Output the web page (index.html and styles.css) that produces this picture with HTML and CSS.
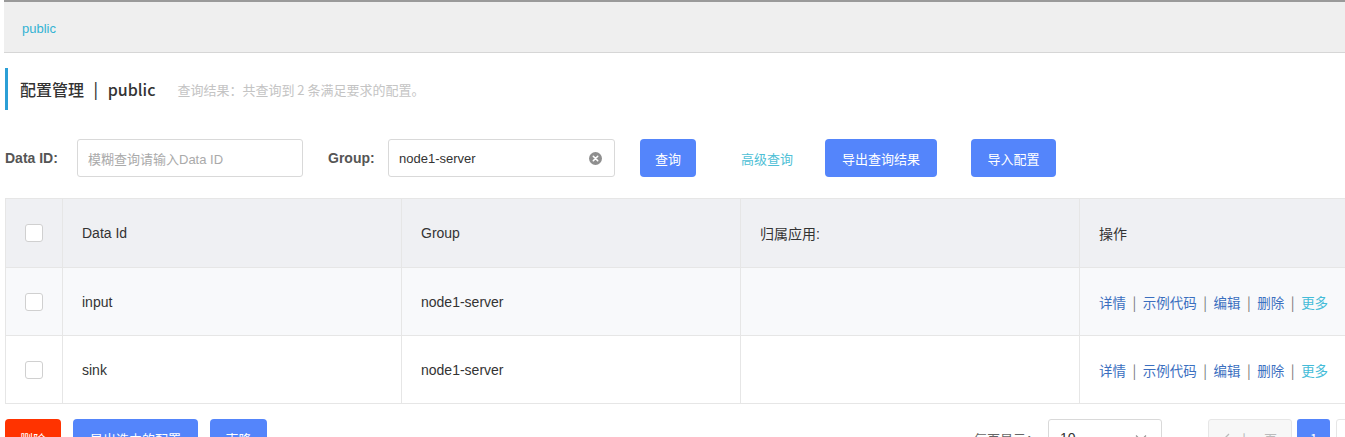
FILE: index.html
```html
<!DOCTYPE html>
<html lang="zh-CN">
<head>
<meta charset="utf-8">
<title>配置管理</title>
<link rel="stylesheet" href="styles.css">
</head>
<body>
<div class="topbar"><span class="ns">public</span></div>
<div class="page">
  <div class="title-row">
    <div class="title">配置管理 <span class="sep">|</span> public</div>
    <div class="summary">查询结果：共查询到 2 条满足要求的配置。</div>
  </div>

  <div class="search">
    <label class="lbl lbl-id">Data ID:</label>
    <div class="input input-id"><span class="placeholder">模糊查询请输入Data ID</span></div>
    <label class="lbl lbl-group">Group:</label>
    <div class="input input-group">
      <span class="value">node1-server</span>
      <span class="clear">
        <svg width="13" height="13" viewBox="0 0 13 13"><circle cx="6.5" cy="6.5" r="6.5" fill="#8f8f8f"/><path d="M4.3 4.3L8.7 8.7M8.7 4.3L4.3 8.7" stroke="#fff" stroke-width="1.6" stroke-linecap="round"/></svg>
      </span>
    </div>
    <button class="btn btn-primary btn-query">查询</button>
    <a class="adv">高级查询</a>
    <button class="btn btn-primary btn-export">导出查询结果</button>
    <button class="btn btn-primary btn-import">导入配置</button>
  </div>

  <table class="grid">
    <colgroup>
      <col class="c-check"><col class="c-col"><col class="c-col"><col class="c-col"><col class="c-ops">
    </colgroup>
    <thead>
      <tr>
        <th class="chk"><span class="box"></span></th>
        <th>Data Id</th>
        <th>Group</th>
        <th>归属应用:</th>
        <th>操作</th>
      </tr>
    </thead>
    <tbody>
      <tr class="hover">
        <td class="chk"><span class="box"></span></td>
        <td>input</td>
        <td>node1-server</td>
        <td></td>
        <td class="ops"><a>详情</a><span class="bar">|</span><a>示例代码</a><span class="bar">|</span><a>编辑</a><span class="bar">|</span><a>删除</a><span class="bar">|</span><a class="more">更多</a></td>
      </tr>
      <tr>
        <td class="chk"><span class="box"></span></td>
        <td>sink</td>
        <td>node1-server</td>
        <td></td>
        <td class="ops"><a>详情</a><span class="bar">|</span><a>示例代码</a><span class="bar">|</span><a>编辑</a><span class="bar">|</span><a>删除</a><span class="bar">|</span><a class="more">更多</a></td>
      </tr>
    </tbody>
  </table>

  <div class="footer">
    <div class="batch">
      <button class="btn btn-danger btn-del">删除</button>
      <button class="btn btn-primary btn-exsel">导出选中的配置</button>
      <button class="btn btn-primary btn-clone">克隆</button>
    </div>
    <div class="pager">
      <span class="per">每页显示：</span>
      <div class="select"><span>10</span>
        <svg width="12" height="8" viewBox="0 0 12 8"><path d="M1 1.5L6 6.5L11 1.5" fill="none" stroke="#999" stroke-width="1.3"/></svg>
      </div>
      <button class="pbtn prev">
        <svg width="7" height="11" viewBox="0 0 7 11"><path d="M6 1L1.5 5.5L6 10" fill="none" stroke="#bbb" stroke-width="1.3"/></svg>
        上一页</button>
      <button class="pbtn cur">1</button>
      <button class="pbtn next">下一页</button>
    </div>
  </div>
</div>
</body>
</html>
```
FILE: styles.css
```css
html, body {
  margin: 0;
  padding: 0;
  background: #fff;
  overflow: hidden;
}
body {
  font-family: "Liberation Sans", "Noto Sans CJK SC", sans-serif;
  color: #333;
  font-size: 14px;
  width: 1345px;
}
.topbar {
  margin-left: 4px;
  height: 50px;
  border-top: 2px solid #9a9a9a;
  border-bottom: 1px solid #d6d6d6;
  background: #efefef;
  display: flex;
  align-items: center;
  padding-left: 18px;
  box-sizing: content-box;
}
.ns {
  color: #33b3d3;
  font-size: 13px;
  margin-top: 2px;
}
.page {
  padding-left: 5px;
}
.title-row {
  margin-top: 15px;
  height: 42px;
  border-left: 3px solid #2b9fd6;
  display: flex;
  align-items: center;
  padding-left: 12px;
}
.title {
  font-family: "Noto Sans CJK SC", sans-serif;
  font-size: 16px;
  font-weight: 500;
  color: #333;
}
.title .sep {
  margin: 0 6px;
}
.summary {
  margin-left: 22px;
  font-family: "Noto Sans CJK SC", sans-serif;
  font-size: 13px;
  color: #c4c4c4;
}
.search {
  margin-top: 29px;
  height: 38px;
  display: flex;
  align-items: center;
}
.lbl {
  font-weight: bold;
  font-size: 14px;
  color: #555;
}
.lbl-id { width: 60px; margin-right: 12px; }
.lbl-group { margin-left: 25px; width: 48px; margin-right: 12px; }
.input {
  height: 38px;
  box-sizing: border-box;
  border: 1px solid #d9d9d9;
  border-radius: 3px;
  display: flex;
  align-items: center;
  padding: 0 10px;
  font-size: 13px;
}
.input-id { width: 226px; }
.input-group { width: 227px; justify-content: space-between; }
.placeholder { color: #aaa; }
.value { color: #333; }
.clear { display: flex; margin-right: 2px; }
.btn {
  height: 38px;
  border: none;
  border-radius: 4px;
  color: #fff;
  font-family: "Noto Sans CJK SC", sans-serif;
  font-size: 13px;
  padding: 0;
  cursor: pointer;
}
.btn-primary { background: #5485fb; }
.btn-danger { background: #ff3300; }
.btn-query { width: 56px; margin-left: 25px; }
.adv {
  margin-left: 45px;
  color: #4fbfd6;
  font-family: "Noto Sans CJK SC", sans-serif;
  font-size: 13px;
}
.btn-export { width: 112px; margin-left: 32px; }
.btn-import { width: 85px; margin-left: 34px; }

.grid {
  margin-top: 21px;
  border-collapse: collapse;
  table-layout: fixed;
  width: 1413px;
}
.c-check { width: 57px; }
.c-col { width: 339px; }
.c-ops { width: 339px; }
.grid th, .grid td {
  border: 1px solid #e6e6e6;
  text-align: left;
  padding: 0 0 0 19px;
  font-weight: normal;
  font-size: 14px;
  color: #333;
  white-space: nowrap;
}
.grid th {
  background: #eff0f3;
  height: 68px;
}
.grid td { height: 67px; }
.grid tr.hover td { background: #f8f9fb; }
.grid .chk { padding-left: 19px; }
.box {
  display: block;
  width: 18px;
  height: 18px;
  box-sizing: border-box;
  border: 1px solid #d0d0d0;
  border-radius: 3px;
  background: #fff;
}
.ops {
  font-family: "Noto Sans CJK SC", sans-serif;
}
.grid td.ops a { color: #3b6fbf; font-size: 13.5px; }
.grid td.ops a.more { color: #44bcd8; }
.ops .bar { color: #777; margin: 0 6.5px; }

.footer {
  margin-top: 15px;
  display: flex;
  justify-content: space-between;
  align-items: flex-start;
}
.batch { display: flex; }
.btn-del { width: 56px; }
.btn-exsel { width: 125px; margin-left: 12px; }
.btn-clone { width: 57px; margin-left: 12px; }
.pager {
  display: flex;
  align-items: center;
  margin-right: -75px;
}
.per {
  font-family: "Noto Sans CJK SC", sans-serif;
  color: #666;
  font-size: 13px;
  margin-right: 9px;
}
.select {
  width: 114px;
  height: 38px;
  box-sizing: border-box;
  border: 1px solid #d9d9d9;
  border-radius: 3px;
  display: flex;
  align-items: center;
  justify-content: space-between;
  padding: 0 14px 0 11px;
  font-size: 14px;
  color: #333;
}
.pbtn {
  height: 38px;
  border-radius: 3px;
  font-family: "Noto Sans CJK SC", sans-serif;
  font-size: 13px;
  padding: 0;
}
.prev {
  margin-left: 46px;
  width: 84px;
  border: 1px solid #e6e6e6;
  background: #f7f7f7;
  color: #bbb;
  display: flex;
  align-items: center;
  justify-content: center;
  gap: 8px;
}
.cur {
  margin-left: 5px;
  width: 33px;
  border: none;
  background: #5485fb;
  color: #fff;
}
.next {
  margin-left: 6px;
  width: 84px;
  border: 1px solid #e6e6e6;
  background: #fff;
  color: #666;
}
```
